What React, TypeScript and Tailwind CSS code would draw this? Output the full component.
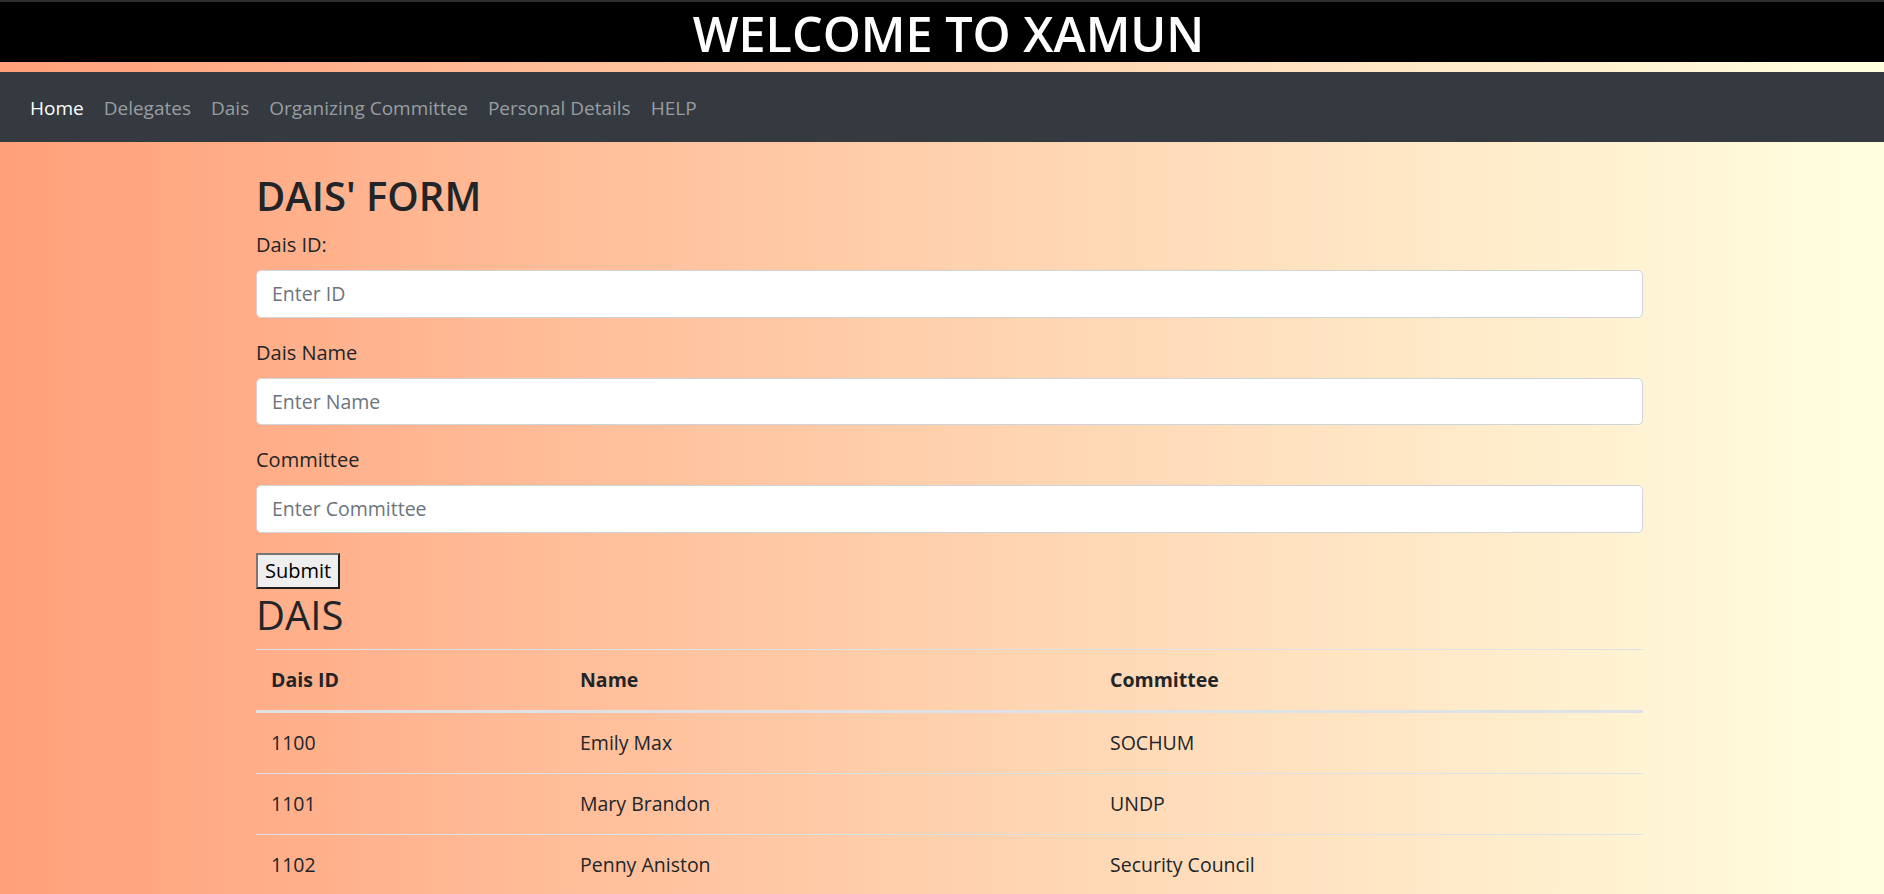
import React from "react";

const navLinks = [
  { label: "Home", active: true },
  { label: "Delegates" },
  { label: "Dais" },
  { label: "Organizing Committee" },
  { label: "Personal Details" },
  { label: "HELP" },
];

const rows = [
  { id: "1100", name: "Emily Max", committee: "SOCHUM" },
  { id: "1101", name: "Mary Brandon", committee: "UNDP" },
  { id: "1102", name: "Penny Aniston", committee: "Security Council" },
];

function Field({ label, placeholder }: { label: string; placeholder: string }) {
  return (
    <div className="flex flex-col mb-[20px]">
      <label className="text-[20px] leading-[30px] mb-[10px]">{label}</label>
      <input
        type="text"
        placeholder={placeholder}
        className="h-[47.5px] w-full bg-white border border-[#ced4da] rounded-[5px] px-[15px] text-[19.5px] text-[#495057] placeholder:text-[#6c757d] outline-none"
      />
    </div>
  );
}

export default function App() {
  return (
    <div
      className="min-h-screen bg-gradient-to-r from-[#ffa07a] to-[#ffffe0] text-[#212529]"
      style={{ fontFamily: '"Open Sans", "Noto Sans", sans-serif' }}
    >
      <div className="h-[2px] bg-[#2e2e2e]" />
      <h1 className="h-[60px] bg-black text-white text-center pl-[13px] text-[48.5px] leading-[62px] font-semibold mb-[10px]">
        WELCOME TO XAMUN
      </h1>

      <nav className="h-[70px] bg-[#343a40] flex items-center px-[20px] pt-[2px]">
        {navLinks.map((l) => (
          <a
            key={l.label}
            href="#"
            className={`px-[10px] text-[19px] leading-[30px] ${
              l.active ? "text-white" : "text-[#9a9da0]"
            }`}
          >
            {l.label}
          </a>
        ))}
      </nav>

      <div className="ml-[256px] w-[1387px] pt-[30px]">
        <h2 className="text-[40px] leading-[48px] font-semibold mb-[10px]">DAIS' FORM</h2>
        <form>
          <Field label="Dais ID:" placeholder="Enter ID" />
          <Field label="Dais Name" placeholder="Enter Name" />
          <Field label="Committee" placeholder="Enter Committee" />
          <button
            type="button"
            className="h-[36px] px-[7px] bg-[#efefef] text-black text-[20px] leading-[30px] border-2 border-t-[#767676] border-l-[#767676] border-r-[#1f1f1f] border-b-[#1f1f1f]"
          >
            Submit
          </button>
        </form>
        <h2 className="text-[40px] leading-[48px] font-normal mt-[2px] mb-[10px]">DAIS</h2>
        <table className="w-full text-[19.5px] leading-[30px] border-collapse">
          <thead>
            <tr className="border-t border-[#dee2e6] border-b-[3px] border-b-[#dee2e6]">
              <th className="w-[309px] text-left font-bold px-[15px] py-[15px]">Dais ID</th>
              <th className="w-[530px] text-left font-bold px-[15px] py-[15px]">Name</th>
              <th className="text-left font-bold px-[15px] py-[15px]">Committee</th>
            </tr>
          </thead>
          <tbody>
            {rows.map((r) => (
              <tr key={r.id} className="border-t border-[#dee2e6]">
                <td className="px-[15px] py-[15px]">{r.id}</td>
                <td className="px-[15px] py-[15px]">{r.name}</td>
                <td className="px-[15px] py-[15px]">{r.committee}</td>
              </tr>
            ))}
          </tbody>
        </table>
      </div>
    </div>
  );
}
